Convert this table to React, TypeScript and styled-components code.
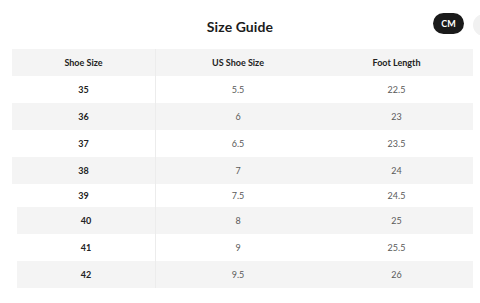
import React from "react";
import styled, { createGlobalStyle } from "styled-components";

interface ISizeRow {
  eu: string;
  us: string;
  foot: string;
}

interface IRowProps {
  $shaded: boolean;
  $height: number;
  $inset: number;
}

const sizes: ISizeRow[] = [
  { eu: "35", us: "5.5", foot: "22.5" },
  { eu: "36", us: "6", foot: "23" },
  { eu: "37", us: "6.5", foot: "23.5" },
  { eu: "38", us: "7", foot: "24" },
  { eu: "39", us: "7.5", foot: "24.5" },
  { eu: "40", us: "8", foot: "25" },
  { eu: "41", us: "9", foot: "25.5" },
  { eu: "42", us: "9.5", foot: "26" }
];

const GlobalStyle = createGlobalStyle`
  body {
    margin: 0;
    background: #fff;
    font-family: Lato, "Open Sans", sans-serif;
    overflow: hidden;
  }
`;

const Page = styled.div`
  width: 480px;
  height: 303px;
  overflow: hidden;
`;

const TopBar = styled.div`
  position: relative;
  height: 49px;
  display: flex;
  align-items: center;
  justify-content: center;
`;

const Title = styled.h2`
  margin: 4px 0 0;
  font-size: 14px;
  font-weight: 700;
  color: #1c1c1c;
  letter-spacing: 0.1px;
`;

const UnitPill = styled.div`
  position: absolute;
  top: 13px;
  left: 433px;
  width: 31px;
  height: 21px;
  border-radius: 11px;
  background: #1a1a1a;
  color: #fff;
  font-size: 9px;
  font-weight: 700;
  display: flex;
  align-items: center;
  justify-content: center;
`;

const CloseCircle = styled.div`
  position: absolute;
  top: 14px;
  left: 473px;
  width: 22px;
  height: 22px;
  border-radius: 50%;
  background: #f1f1f1;
`;

const Table = styled.div`
  margin: 0 7px 0 12px;
  display: flex;
  flex-direction: column;
`;

const Row = styled.div<IRowProps>`
  display: grid;
  grid-template-columns: ${(p) => 144 - p.$inset}px 164px 1fr;
  height: ${(p) => p.$height}px;
  margin-left: ${(p) => p.$inset}px;
  background: ${(p) => (p.$shaded ? "#f4f4f4" : "#fff")};
`;

const Cell = styled.div<{ $strong?: boolean; $divider?: boolean }>`
  display: flex;
  align-items: center;
  justify-content: center;
  font-size: 9px;
  font-weight: ${(p) => (p.$strong ? 700 : 400)};
  color: ${(p) => (p.$strong ? "#222" : "#5a5a5a")};
  border-right: ${(p) => (p.$divider ? "1px solid #ececec" : "none")};
`;

const App: React.FC = () => {
  return (
    <Page>
      <GlobalStyle />
      <TopBar>
        <Title>Size Guide</Title>
        <UnitPill>CM</UnitPill>
        <CloseCircle />
      </TopBar>
      <Table>
        <Row $shaded={true} $height={27} $inset={0}>
          <Cell $strong $divider>
            Shoe Size
          </Cell>
          <Cell $strong>US Shoe Size</Cell>
          <Cell $strong>Foot Length</Cell>
        </Row>
        {sizes.map((s, i) => {
          // the lower rows sit a little further in and 39 is cut short
          const lower = i >= 5;
          return (
            <Row
              key={s.eu}
              $shaded={i % 2 === 1}
              $height={s.eu === "39" ? 23 : 27}
              $inset={lower ? 5 : 0}
            >
              <Cell $strong $divider>
                {s.eu}
              </Cell>
              <Cell>{s.us}</Cell>
              <Cell>{s.foot}</Cell>
            </Row>
          );
        })}
      </Table>
    </Page>
  );
};

export default App;
